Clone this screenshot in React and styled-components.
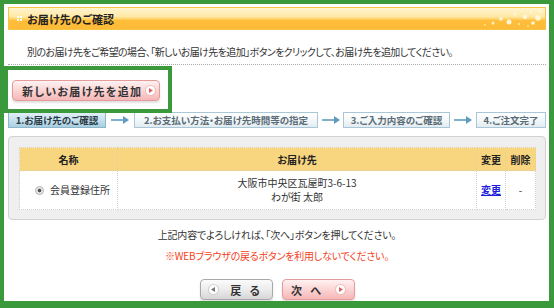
import React from 'react';
import styled, { createGlobalStyle } from 'styled-components';

const GREEN = '#3a9a3b';

const Global = createGlobalStyle`
  html, body { margin: 0; padding: 0; background: #fff; }
  body {
    font-family: "Noto Sans CJK JP", "Noto Sans", sans-serif;
    color: #333;
    font-feature-settings: "palt";
  }
`;

const Frame = styled.div`
  width: 554px;
  height: 308px;
  box-sizing: border-box;
  border: 4px solid ${GREEN};
  border-right-width: 5px;
  border-bottom-width: 7px;
  padding: 3px 3px 0 4px;
  display: flex;
  flex-direction: column;
  overflow: hidden;
`;

const Header = styled.div`
  position: relative;
  height: 23px;
  box-sizing: border-box;
  border: 1px solid #f8c447;
  background: linear-gradient(#fff4cf 0%, #ffe9a8 40%, #ffd46a 52%, #ffbd3a 60%, #ffbb36 100%);
  display: flex;
  align-items: center;
  padding-left: 8px;
  gap: 5px;
  overflow: hidden;
`;

const HeaderIcon = styled.span`
  display: grid;
  grid-template-columns: 2px 2px;
  grid-template-rows: 2px 2px;
  gap: 1px;
  & > i { background: #fff; display: block; }
`;

const Title = styled.h1`
  margin: 0;
  font-size: 11px;
  font-weight: bold;
  color: #222;
  letter-spacing: 0.2px;
`;

const Sparkles = styled.svg`
  position: absolute;
  right: 0;
  top: 0;
`;

const Info = styled.p`
  margin: 0;
  padding: 14px 0 5px 19px;
  font-size: 10px;
  line-height: 15px;
  letter-spacing: -0.6px;
  color: #333;
  border-bottom: 1px dotted #a8a8a8;
`;

const Highlight = styled.div`
  position: relative;
  z-index: 2;
  margin: 1px 0 0 -4px;
  width: 168px;
  height: 47px;
  box-sizing: border-box;
  border: 4px solid ${GREEN};
  padding: 10px 0 0 4px;
`;

const PinkButton = styled.button`
  display: flex;
  align-items: center;
  justify-content: ${p => (p.$wide ? 'flex-start' : 'center')};
  gap: ${p => (p.$wide ? '0' : '12px')};
  width: ${p => p.$w}px;
  height: 21px;
  box-sizing: border-box;
  padding: 0 ${p => (p.$wide ? 4 : 0)}px 0 ${p => (p.$wide ? 9 : 0)}px;
  border: 1px solid #e39b9b;
  border-radius: 4px;
  background: linear-gradient(#fff2f2 0%, #fbd4d4 50%, #f6b7b7 100%);
  box-shadow: 0 2px 2px rgba(0, 0, 0, 0.12);
  font-family: inherit;
  font-feature-settings: "palt";
  font-size: 11px;
  font-weight: bold;
  color: #333;
  white-space: nowrap;
  letter-spacing: ${p => p.$ls}px;
  cursor: pointer;
`;

const GrayButton = styled(PinkButton)`
  border-color: #a9a9a9;
  background: linear-gradient(#fbfbfb 0%, #ececec 50%, #d6d6d6 100%);
`;

const Dot = styled.span`
  display: inline-flex;
  align-items: center;
  justify-content: center;
  flex: none;
  width: 9px;
  height: 9px;
  border-radius: 50%;
  background: #fff;
  box-shadow: 0 0 0 1px ${p => (p.$gray ? '#cfcfcf' : '#f1bcbc')};
  margin-left: ${p => (p.$auto ? 'auto' : '0')};
`;

const StepBar = styled.div`
  display: flex;
  align-items: center;
  height: 16px;
  margin-top: -1px;
`;

const Step = styled.div`
  width: ${p => p.$w}px;
  height: 16px;
  box-sizing: border-box;
  border: 1px solid ${p => (p.$active ? '#8db6ca' : '#a9c7d6')};
  background: ${p =>
    p.$active
      ? 'linear-gradient(#e1eff7 0%, #c6e0ee 50%, #a9cfe2 100%)'
      : 'linear-gradient(#ffffff 0%, #f4f8fa 50%, #e2ecf1 100%)'};
  font-size: 9.5px;
  font-weight: bold;
  line-height: 14px;
  text-align: center;
  color: ${p => (p.$active ? '#2a3a44' : '#5a6b75')};
  letter-spacing: 0px;
  white-space: nowrap;
  overflow: hidden;
`;

const Arrow = styled.div`
  width: ${p => p.$w}px;
  display: flex;
  justify-content: center;
`;

const TableBox = styled.div`
  margin-top: 8px;
  border: 1px solid #d2d2d2;
  border-radius: 4px;
  background: #efefef;
  padding: 10px 10px 9px 10px;
`;

const Table = styled.table`
  width: 516px;
  border-collapse: collapse;
  table-layout: fixed;
  font-size: 10px;
`;

const Th = styled.th`
  height: 22px;
  padding: 0;
  background: #f8d57f;
  border: 1px dotted #e2d0a0;
  font-weight: bold;
  color: #222;
  text-align: center;
`;

const Td = styled.td`
  height: 38px;
  padding: 0;
  background: #fff;
  border: 1px dotted #cfcfcf;
  text-align: ${p => p.$align || 'center'};
  line-height: 14px;
  color: #333;
`;

const NameCell = styled.div`
  display: flex;
  align-items: center;
  gap: 6px;
  padding-left: 15px;
`;

const Radio = styled.span`
  width: 7px;
  height: 7px;
  border-radius: 50%;
  border: 1px solid #b4b4b4;
  background: radial-gradient(circle, #555 0 1.6px, #e8e8e8 2.2px);
`;

const Link = styled.a`
  color: #1c1cdd;
  text-decoration: underline;
  font-weight: bold;
`;

const Note = styled.p`
  margin: ${p => p.$mt}px 0 0;
  text-align: center;
  font-size: 10px;
  line-height: 14px;
  letter-spacing: -0.2px;
  color: ${p => (p.$red ? '#f2421c' : '#333')};
`;

const ButtonRow = styled.div`
  display: flex;
  justify-content: center;
  gap: 9px;
  margin-top: 16px;
`;

const Tri = ({ dir = 'right', color }) => (
  <svg width="5" height="5" viewBox="0 0 5 5">
    {dir === 'right' ? (
      <polygon points="1,0 5,2.5 1,5" fill={color} />
    ) : (
      <polygon points="4,0 0,2.5 4,5" fill={color} />
    )}
  </svg>
);

const StepArrow = () => (
  <svg width="18" height="8" viewBox="0 0 18 8">
    <rect x="0" y="3" width="13" height="2" fill="#7fb0cc" />
    <polygon points="12,0 18,4 12,8" fill="#5f9cc0" />
  </svg>
);

const sparkles = [
  [20, 15, 1.5, 0.8], [28, 11, 2, 0.7], [36, 14, 2.5, 0.9], [42, 6, 1.5, 0.7],
  [46, 16, 1.2, 0.6], [52, 9, 2.2, 0.8], [58, 4, 1.2, 0.6], [60, 15, 1.8, 0.9],
  [65, 10, 2.8, 0.85], [55, 18, 1, 0.6], [12, 17, 1, 0.6], [67, 3, 1.5, 0.6],
];

export default function App() {
  return (
    <>
      <Global />
      <Frame>
        <Header>
          <HeaderIcon><i /><i /><i /><i /></HeaderIcon>
          <Title>お届け先のご確認</Title>
          <Sparkles width="72" height="21" viewBox="0 0 72 21">
            {sparkles.map(([x, y, r, o], i) => (
              <circle key={i} cx={x} cy={y} r={r} fill="#fffbe8" opacity={o} />
            ))}
          </Sparkles>
        </Header>
        <Info>
          別のお届け先をご希望の場合、「新しいお届け先を追加」ボタンをクリックして、お届け先を追加してください。
        </Info>
        <Highlight>
          <PinkButton $wide $w={148} $ls={1.3}>
            新しいお届け先を追加
            <Dot $auto><Tri color="#e0615f" /></Dot>
          </PinkButton>
        </Highlight>
        <StepBar>
          <Step $active $w={98}>1.お届け先のご確認</Step>
          <Arrow $w={28}><StepArrow /></Arrow>
          <Step $w={184}>2.お支払い方法・お届け先時間等の指定</Step>
          <Arrow $w={25}><StepArrow /></Arrow>
          <Step $w={107}>3.ご入力内容のご確認</Step>
          <Arrow $w={26}><StepArrow /></Arrow>
          <Step $w={70}>4.ご注文完了</Step>
        </StepBar>
        <TableBox>
          <Table>
            <colgroup>
              <col style={{ width: 98 }} />
              <col style={{ width: 359 }} />
              <col style={{ width: 29 }} />
              <col style={{ width: 30 }} />
            </colgroup>
            <thead>
              <tr>
                <Th>名称</Th>
                <Th>お届け先</Th>
                <Th>変更</Th>
                <Th>削除</Th>
              </tr>
            </thead>
            <tbody>
              <tr>
                <Td $align="left">
                  <NameCell><Radio />会員登録住所</NameCell>
                </Td>
                <Td>
                  大阪市中央区瓦屋町3-6-13<br />わが街 太郎
                </Td>
                <Td><Link href="#">変更</Link></Td>
                <Td>-</Td>
              </tr>
            </tbody>
          </Table>
        </TableBox>
        <Note $mt={8}>上記内容でよろしければ、「次へ」ボタンを押してください。</Note>
        <Note $mt={7} $red>※WEBブラウザの戻るボタンを利用しないでください。</Note>
        <ButtonRow>
          <GrayButton $w={73} $ls={3}>
            <Dot $gray><Tri dir="left" color="#777" /></Dot>
            <span>戻 る</span>
          </GrayButton>
          <PinkButton $w={73} $ls={3}>
            <span>次 へ</span>
            <Dot><Tri color="#e0615f" /></Dot>
          </PinkButton>
        </ButtonRow>
      </Frame>
    </>
  );
}
